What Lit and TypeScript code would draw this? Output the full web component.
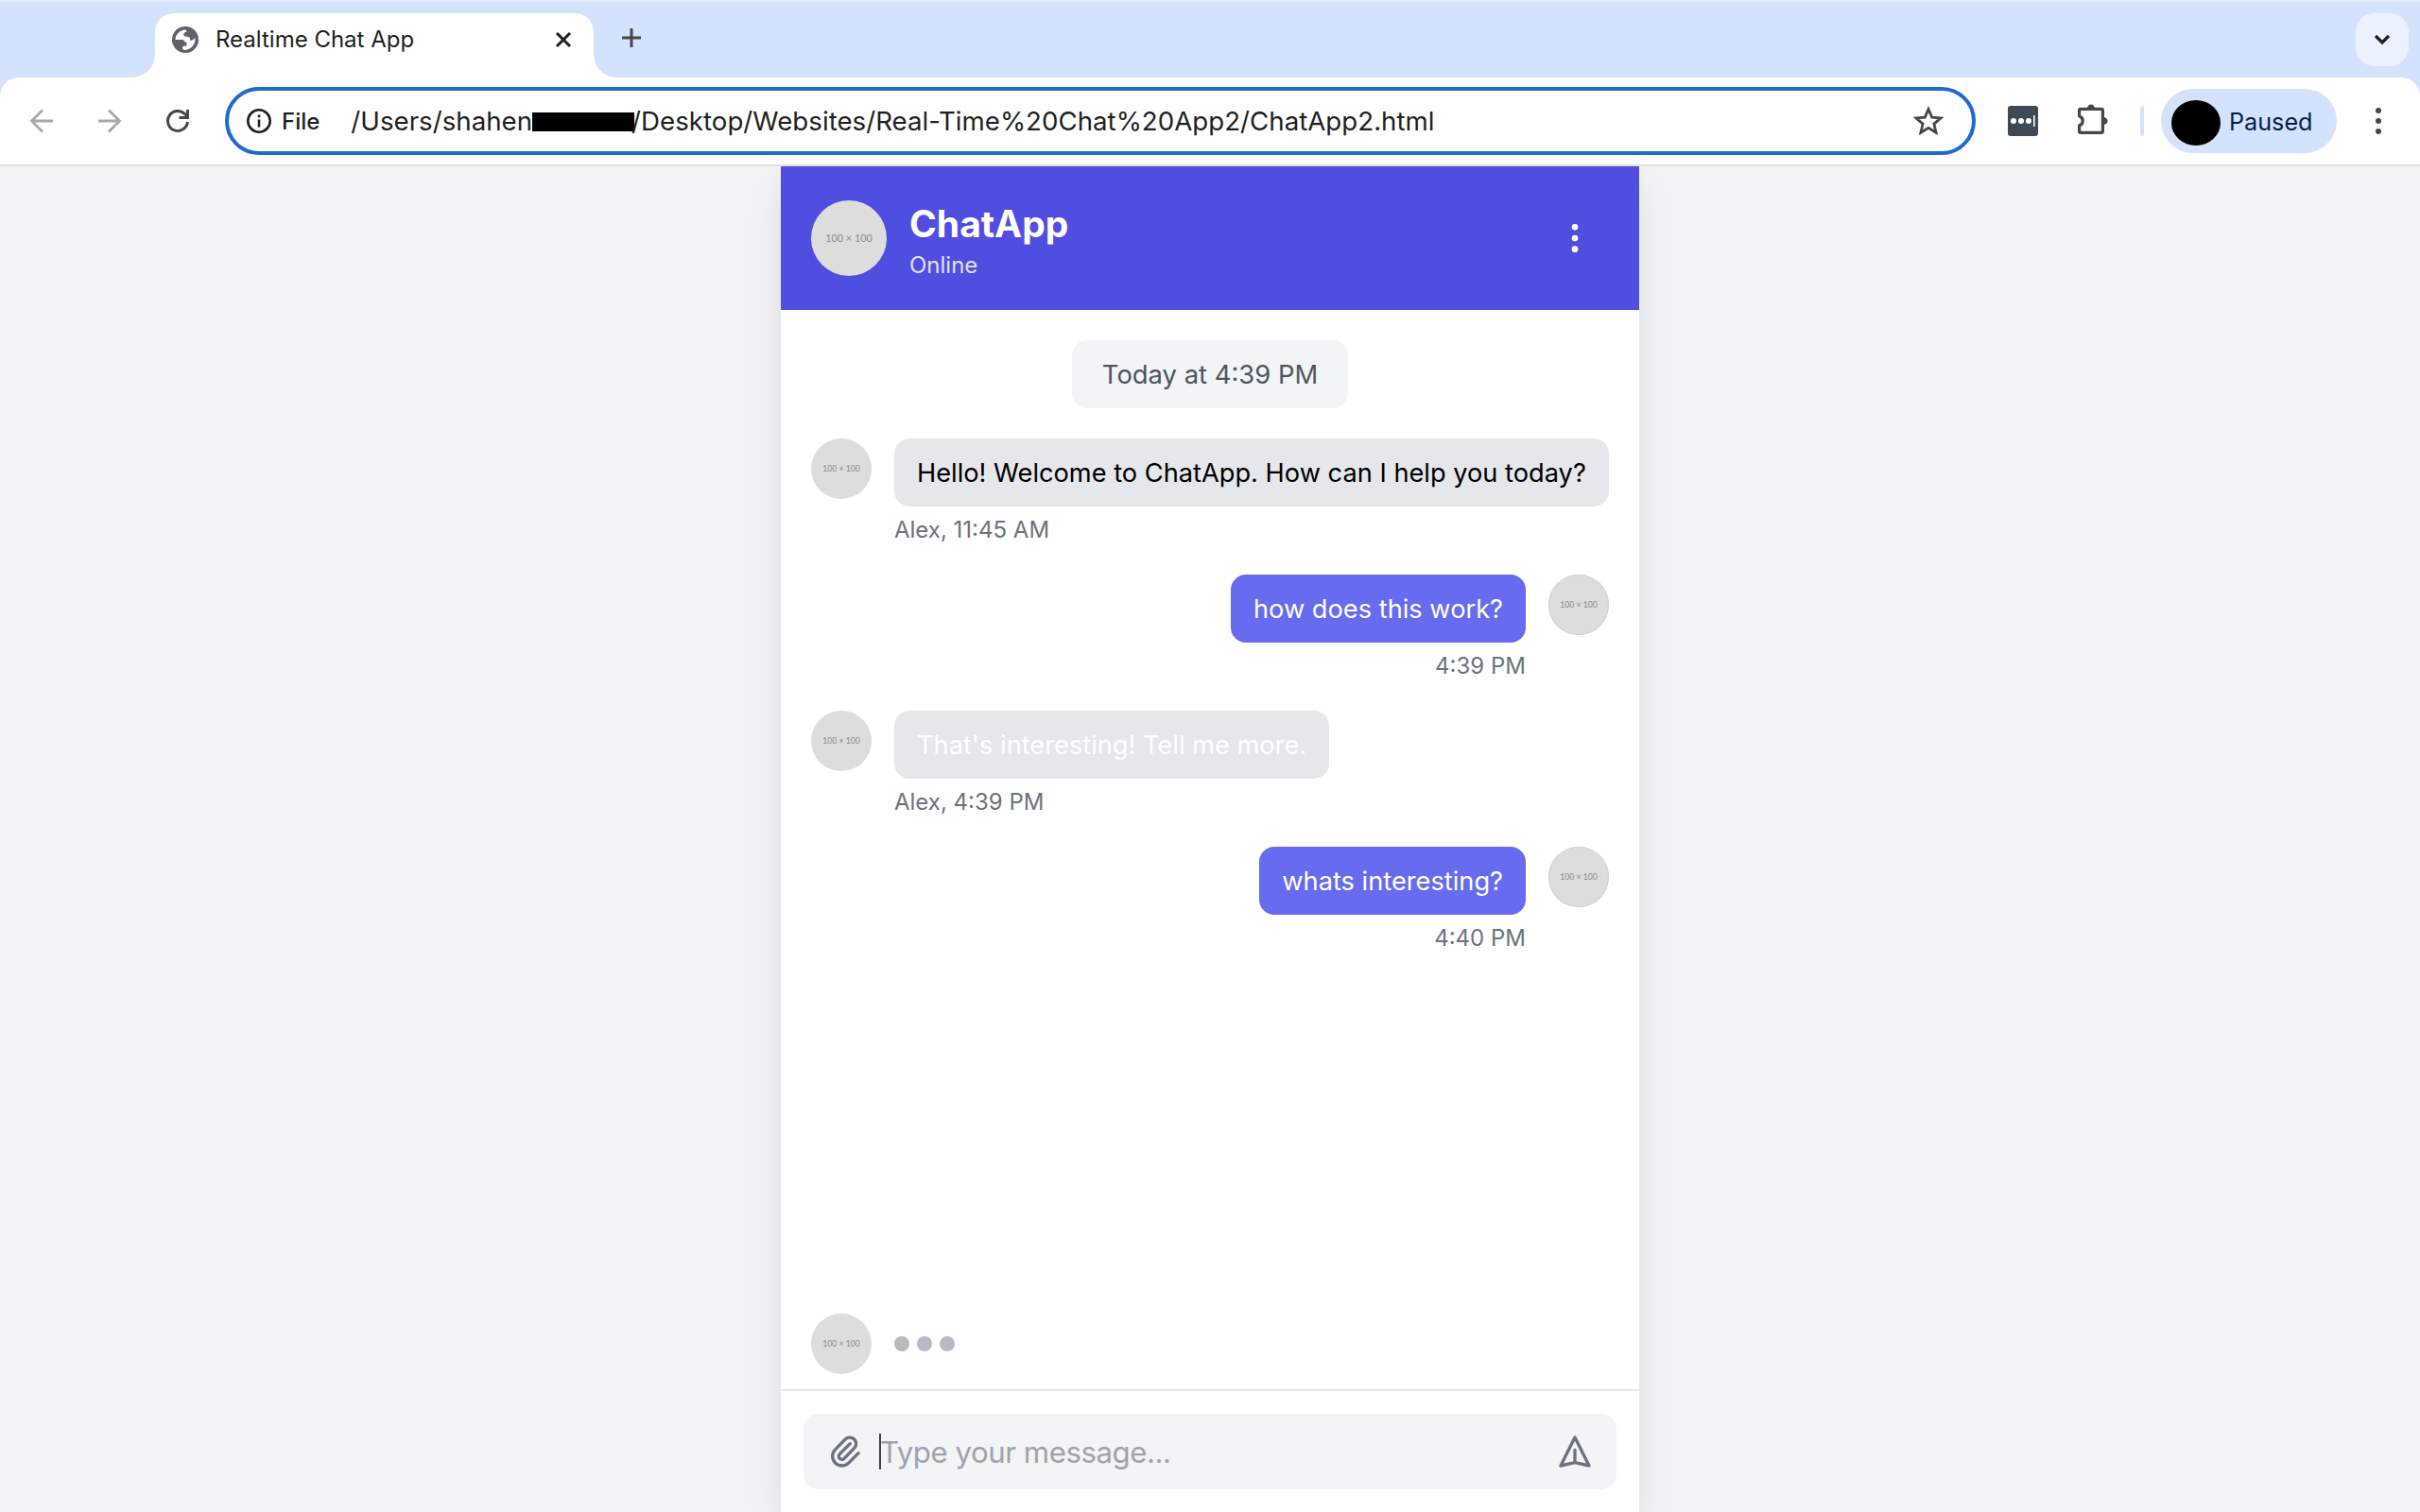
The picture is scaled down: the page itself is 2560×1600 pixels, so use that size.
import { LitElement, html, css, svg } from "lit";
import { customElement, property } from "lit/decorators.js";

interface Message { text: string; meta: string; own: boolean; muted?: boolean; }

const MESSAGES: Message[] = [
  { text: "Hello! Welcome to ChatApp. How can I help you today?", meta: "Alex, 11:45 AM", own: false },
  { text: "how does this work?", meta: "4:39 PM", own: true },
  { text: "That's interesting! Tell me more.", meta: "Alex, 4:39 PM", own: false, muted: true },
  { text: "whats interesting?", meta: "4:40 PM", own: true },
];

@customElement("chat-avatar")
class ChatAvatar extends LitElement {
  static styles = css`
    :host { display: flex; flex: none; align-items: center; justify-content: center; width: 64px; height: 64px;
      border-radius: 50%; background: #ddd; color: #8a8a8a; font: 8.6px/1 Lato, sans-serif; white-space: nowrap; }
    :host([large]) { width: 80px; height: 80px; font-size: 10.8px; }
    :host([own]) { box-shadow: inset 0 0 0 1px #cfcfe4; }
  `;
  render() { return html`<span>100 × 100</span>`; }
}

@customElement("browser-bar")
class BrowserBar extends LitElement {
  static styles = css`
    :host { display: block; flex: none; height: 176px; box-sizing: border-box; background: #d4e3fd; color: #1f1f1f;
      border-top: 2px solid #e3edfd; font-family: Inter, "Liberation Sans", sans-serif; }
    svg { display: block; flex: none; }
    .tabs { display: flex; height: 80px; padding: 12px 12px 0 140px; box-sizing: border-box; }
    .corner { width: 24px; height: 24px; align-self: flex-end; }
    .corner.left { background: radial-gradient(circle at 0 0, transparent 23.5px, #fff 24px); }
    .corner.right { background: radial-gradient(circle at 100% 0, transparent 23.5px, #fff 24px); }
    .tab { display: flex; align-items: center; width: 464px; height: 68px; padding: 0 18px 12px; box-sizing: border-box;
      background: #fff; border-radius: 20px 20px 0 0; }
    .title { flex: 1; margin-left: 18px; font-size: 24px; line-height: 30px; }
    .new { margin: 16px 0 0 6px; }
    .search { display: flex; align-items: center; justify-content: center; width: 56px; height: 56px; margin-left: auto;
      border-radius: 20px; background: #ebf2fe; }
    .toolbar { display: flex; align-items: center; height: 94px; padding: 0 24px; box-sizing: border-box; background: #fff;
      border-radius: 20px 20px 0 0; border-bottom: 2px solid #e1e1e1; }
    .nav { display: flex; gap: 32px; width: 214px; }
    .address { display: flex; align-items: center; width: 1852px; height: 72px; padding: 0 30px 0 18px; box-sizing: border-box;
      border: 4px solid #1f69d2; border-radius: 36px; }
    .file { margin: 0 33px 0 10px; font-size: 24px; font-weight: 500; }
    .url { display: flex; align-items: center; flex: 1; font-size: 27.7px; line-height: 36px; }
    .redacted { width: 108px; height: 20px; margin: 2px -3px 0 0; background: #000; }
    .ext { margin-left: 34px; }
    .puzzle { margin: -4px 0 0 42px; }
    .rule { width: 4px; height: 32px; margin-left: 34px; border-radius: 2px; background: #d4e3fd; }
    .profile { display: flex; align-items: center; gap: 9px; width: 186px; height: 68px; margin-left: 18px; padding-left: 11px;
      box-sizing: border-box; border-radius: 34px; background: #d4e3fd; color: #041e49; font-size: 25.2px; }
    .face { width: 52px; height: 48px; margin-top: 4px; border-radius: 50%; background: #000; }
    .state { margin-top: 2px; }
    .menu { margin-left: 40px; }
  `;
  render() {
    return html`
      <div class="tabs">
        <div class="corner left"></div>
        <div class="tab">
          <svg width="28" height="28" viewBox="0 0 28 28"><circle cx="14" cy="14" r="14" fill="#5f6368"/><path d="M3.500 14C3.500 8.500 8 4 14.500 3.500l1 2C13 6 12 7.500 12.300 9c.3 1.500 2.700 1.500 4.700 2 2 .5 2.500 1.500 2 3.500 1.500 1 4-.5 5.500-2.500C25 18 21 24.500 13.500 25c-2.500-.5-3-2.500-2-4l4-.5c0-2 1-3-1-4-2.500-1-1.500-2-3-2.500z" fill="#fff"/></svg>
          <span class="title">Realtime Chat App</span>
          <svg width="28" height="28" viewBox="0 0 28 28" stroke="#1f1f1f" stroke-width="3"><path d="M7 7l14 14M21 7L7 21"/></svg>
        </div>
        <div class="corner right"></div>
        <svg class="new" width="20" height="20" viewBox="0 0 20 20" stroke="#474747" stroke-width="3"><path d="M10 0v20M0 10h20"/></svg>
        <div class="search"><svg width="22" height="14" viewBox="0 0 22 14" fill="none" stroke="#1f1f1f" stroke-width="3.200"><path d="M4 3l7 7 7-7"/></svg></div>
      </div>
      <div class="toolbar">
        <div class="nav">
          <svg width="40" height="40" viewBox="0 0 40 40" fill="none" stroke="#a9a9a9" stroke-width="2.800"><path d="M32 20H10M21 8.500L9.500 20 21 31.500"/></svg>
          <svg width="40" height="40" viewBox="0 0 40 40" fill="none" stroke="#a9a9a9" stroke-width="2.800"><path d="M8 20h22M19 8.500L30.500 20 19 31.500"/></svg>
          <svg width="40" height="40" viewBox="0 0 40 40" fill="none" stroke="#474747" stroke-width="3"><path d="M30.500 21a10.500 10.500 0 1 1-3-8.500l2.500 2.500M30.500 8v8.500h-9"/></svg>
        </div>
        <div class="address">
          <svg width="28" height="28" viewBox="0 0 28 28" fill="none" stroke="#1f1f1f" stroke-width="2.600"><circle cx="14" cy="14" r="11.700"/><path d="M14 12.500v8M14 7.500v2.800"/></svg>
          <span class="file">File</span>
          <div class="url"><span>/Users/shahen</span><span class="redacted"></span><span>/Desktop/Websites/Real-Time%20Chat%20App2/ChatApp2.html</span></div>
          <svg width="32" height="32" viewBox="0 0 32 32" fill="none" stroke="#474747" stroke-width="2.800"><path d="M16 3.500l3.700 8.600 9.300.8-7.100 6.200 2.200 9.200-8.100-4.900-8.100 4.900 2.200-9.200L3 12.900l9.300-.8z"/></svg>
        </div>
        <svg class="ext" width="32" height="32" viewBox="0 0 32 32"><rect width="32" height="32" rx="3" fill="#3d4a54"/><g fill="#fff"><circle cx="6" cy="16" r="3"/><circle cx="14" cy="16" r="3"/><circle cx="22" cy="16" r="3"/><path d="M27 10h1.600v12H27z"/></g></svg>
        <svg class="puzzle" width="32" height="32" viewBox="0 0 32 32"><path d="M1.600 13V7q0-1.600 1.600-1.600h21.600q1.600 0 1.600 1.600v21.800q0 1.600-1.600 1.600H3.200q-1.600 0-1.600-1.600v-6c4.800-1.400 4.800-8.400 0-9.800z" fill="none" stroke="#474747" stroke-width="3.200" stroke-linejoin="round"/><path d="M0 14v8q3-4 0-8z" fill="#fff"/><path d="M10 5a4 4.600 0 0 1 8 0zM27 14a4.600 4 0 0 1 0 8z" fill="#474747"/></svg>
        <div class="rule"></div>
        <div class="profile"><span class="face"></span><span class="state">Paused</span></div>
        <svg class="menu" width="8" height="30" viewBox="0 0 8 30" fill="#474747"><circle cx="4" cy="4" r="3"/><circle cx="4" cy="15" r="3"/><circle cx="4" cy="26" r="3"/></svg>
      </div>`;
  }
}

@customElement("chat-message")
class ChatMessage extends LitElement {
  @property({ attribute: false }) message!: Message;
  static styles = css`
    :host { display: block; }
    .row { display: flex; gap: 24px; align-items: flex-start; }
    .row.own { flex-direction: row-reverse; }
    .body { display: flex; flex-direction: column; align-items: flex-start; }
    .own .body { align-items: flex-end; }
    .bubble { height: 72px; padding: 0 24px; box-sizing: border-box; border-radius: 16px; background: #e5e7eb; color: #000;
      font-size: 27.22px; line-height: 73px; white-space: nowrap; }
    .own .bubble { background: #666bf0; color: #fff; }
    .muted .bubble { color: #fff; }
    .meta { margin-top: 9px; font-size: 24px; line-height: 32px; height: 31px; color: #6b7280; white-space: nowrap; }
  `;
  render() {
    const m = this.message;
    return html`<div class="row ${m.own ? "own" : ""} ${m.muted ? "muted" : ""}">
      <chat-avatar ?own=${m.own}></chat-avatar>
      <div class="body"><div class="bubble">${m.text}</div><div class="meta">${m.meta}</div></div>
    </div>`;
  }
}

@customElement("app-root")
class AppRoot extends LitElement {
  static styles = css`
    :host { display: flex; flex-direction: column; height: 1600px; overflow: hidden; background: #f3f4f6;
      font-family: Inter, "Liberation Sans", sans-serif; }
    .page { flex: 1; min-height: 0; display: flex; justify-content: center; overflow: hidden; }
    .chat { display: flex; flex-direction: column; width: 908px; background: #fff;
      box-shadow: 0 20px 50px rgba(0,0,0,.08), 0 8px 20px rgba(0,0,0,.03); }
    .head { display: flex; align-items: center; flex: none; height: 152px; padding: 0 48px 0 32px; box-sizing: border-box;
      background: #504de1; color: #fff; }
    .who { flex: 1; margin-left: 24px; padding-top: 1px; }
    .name { font-size: 39px; font-weight: 700; line-height: 56px; }
    .status { font-size: 24px; line-height: 32px; color: #dfe1fc; }
    .log { flex: 1; display: flex; flex-direction: column; gap: 32px; padding: 32px; }
    .date { align-self: center; height: 72px; padding: 0 32px; border-radius: 16px; background: #f3f4f6; color: #4b5563;
      font-size: 27.4px; line-height: 73px; }
    .typing { display: flex; align-items: center; gap: 24px; padding: 0 32px 16px; }
    .dots { display: flex; gap: 8px; }
    .dot { width: 16px; height: 16px; border-radius: 50%; background: #b5bac4; }
    .foot { flex: none; padding: 24px; border-top: 2px solid #e5e7eb; }
    .field { display: flex; align-items: center; height: 80px; padding: 0 24px; box-sizing: border-box; border-radius: 16px;
      background: #f3f4f6; color: #6b7280; }
    .caret { width: 2px; height: 38px; margin-left: 16px; background: #374151; }
    .hint { flex: 1; margin: 1px 0 0 -1px; font-size: 31.2px; letter-spacing: -.45px; color: #9ca3af; }
  `;
  render() {
    const icon = (d: string) => html`<svg width="40" height="40" viewBox="0 0 24 24" fill="none" stroke="currentColor"
      stroke-width="2" stroke-linecap="round" stroke-linejoin="round">${svg`<path d=${d}></path>`}</svg>`;
    return html`
      <browser-bar></browser-bar>
      <div class="page"><div class="chat">
        <div class="head">
          <chat-avatar large></chat-avatar>
          <div class="who"><div class="name">ChatApp</div><div class="status">Online</div></div>
          <svg width="40" height="40" viewBox="0 0 24 24" fill="none" stroke="currentColor" stroke-width="2"><path d="M12 5v.01M12 12v.01M12 19v.01M12 6a1 1 0 110-2 1 1 0 010 2zm0 7a1 1 0 110-2 1 1 0 010 2zm0 7a1 1 0 110-2 1 1 0 010 2z"/></svg>
        </div>
        <div class="log">
          <div class="date">Today at 4:39 PM</div>
          ${MESSAGES.map((m) => html`<chat-message .message=${m}></chat-message>`)}
        </div>
        <div class="typing"><chat-avatar></chat-avatar><div class="dots"><span class="dot"></span><span class="dot"></span><span class="dot"></span></div></div>
        <div class="foot"><div class="field">
          ${icon("M15.172 7l-6.586 6.586a2 2 0 102.828 2.828l6.414-6.586a4 4 0 00-5.656-5.656l-6.415 6.585a6 6 0 108.486 8.486L20.5 13")}
          <span class="caret"></span><span class="hint">Type your message...</span>
          ${icon("M12 19l9 2-9-18-9 18 9-2zm0 0v-8")}
        </div></div>
      </div></div>`;
  }
}
